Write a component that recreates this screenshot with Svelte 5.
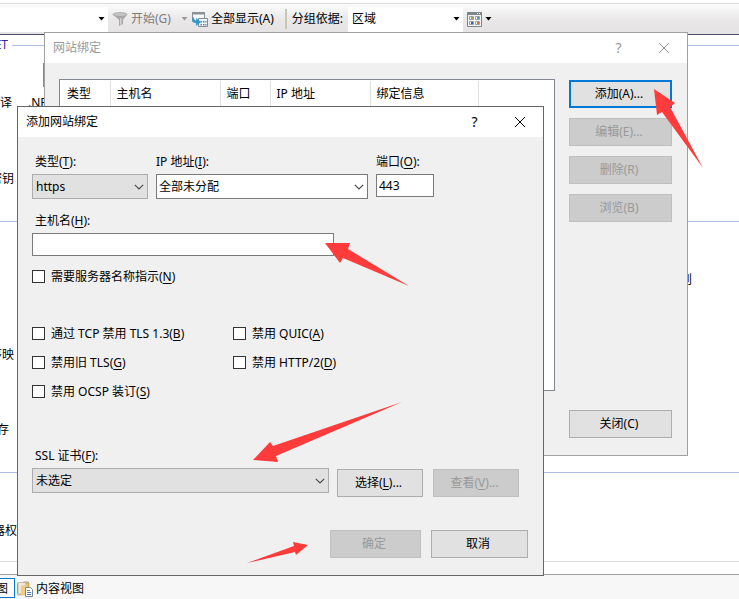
<script>
  const columns = [
    { name: '类型', width: 49 },
    { name: '主机名', width: 110 },
    { name: '端口', width: 50 },
    { name: 'IP 地址', width: 100 },
    { name: '绑定信息', width: 108 },
  ];
  const actions = [
    { label: '添加(A)...', primary: true },
    { label: '编辑(E)...', disabled: true },
    { label: '删除(R)', disabled: true },
    { label: '浏览(B)', disabled: true },
  ];
  const options = [
    { id: 'tls13', text: '通过 TCP 禁用 TLS 1.3', key: 'B' },
    { id: 'quic', text: '禁用 QUIC', key: 'A' },
    { id: 'oldtls', text: '禁用旧 TLS', key: 'G' },
    { id: 'http2', text: '禁用 HTTP/2', key: 'D' },
    { id: 'ocsp', text: '禁用 OCSP 装订', key: 'S' },
  ];
  const arrows = [
    '654,89 675,103 670,107 703,168 662,112 657,115',
    '325,243 350,243 348,249 409,286 343,258 340,263',
    '253,460 270,442 273,446 402,402 276,456 278,462',
    '247,563 294,546 293,542 308,545 296,555 295,552',
  ];
</script>

{#snippet caret()}
  <svg class="caret" width="7" height="4" viewBox="0 0 7 4" aria-hidden="true"><path d="M0.5 0h6L3.5 3.5z" fill="currentColor" /></svg>
{/snippet}

{#snippet chevron()}
  <svg class="chevron" width="10" height="6" viewBox="0 0 10 6" aria-hidden="true"><path d="M0.8 0.8L5 5 9.2 0.8" fill="none" stroke="#444" stroke-width="1.1" /></svg>
{/snippet}

{#snippet cross()}
  <svg width="12" height="12" viewBox="0 0 12 12" aria-hidden="true"><path d="M1 1l10 10M11 1L1 11" fill="none" stroke="currentColor" stroke-width="1" /></svg>
{/snippet}

<div class="app">
  <header class="toolbar">
    <div class="combo flat filter">
      <select aria-label="筛选"><option></option></select>
      {@render caret()}
    </div>
    <button class="tool dim start">
      <svg width="16" height="16" viewBox="0 0 16 16" aria-hidden="true">
        <path d="M1 3.5L7 9v6l4-2V9l4-5.5z" fill="#a9a9a9" />
        <ellipse cx="8" cy="3.5" rx="7" ry="2" fill="#c4c4c4" stroke="#999" stroke-width=".6" />
        <path d="M8 7v7l1.5-.8V7z" fill="#d0d0d0" />
      </svg>
      <span>开始(G)</span>
      {@render caret()}
    </button>
    <button class="tool all">
      <svg width="17" height="17" viewBox="0 0 17 17" aria-hidden="true">
        <path d="M1.500 1.500h12v9h-12z" fill="#f8f8f8" stroke="#8a9297" />
        <path d="M1 1h13v2.500H1z" fill="#8a9297" />
        <path d="M7.500 7.500h9v8h-9z" fill="#f1f4f8" stroke="#828c96" />
        <path d="M9.500 10h1.500v1.500H9.500zM12 10h1.500v1.500H12zM14.300 10h1.200v1.500h-1.200zM9.500 13h1.500v1.500H9.500zM12 13h1.500v1.500H12zM14.300 13h1.200v1.500h-1.200z" fill="#5c7eaa" />
        <path d="M1.500 6.500v3q0 2.500 3.500 2.500V15l5-4-5-4v2.500Q3 9.500 3 6.500z" fill="#2b9bd4" />
      </svg>
      <span>全部显示(A)</span>
    </button>
    <span class="divider"></span>
    <label for="group">分组依据:</label>
    <div class="combo flat group">
      <select id="group"><option>区域</option></select>
      {@render caret()}
    </div>
    <button class="tool views" aria-label="视图">
      <svg width="15" height="15" viewBox="0 0 15 15" aria-hidden="true">
        <path d="M.5.5h14v14H.5z" fill="#f4f4f4" stroke="#7c868b" />
        <path d="M0 0h15v3H0z" fill="#7c868b" />
        <path d="M10 1h1v1h-1zM12 1h1v1h-1z" fill="#fff" />
        <path d="M2.500 4.500h4v3h-4zM8.500 4.500h4v3h-4zM2.500 9.500h4v3h-4zM8.500 9.500h4v3h-4z" fill="#fff" stroke="#98a1a5" />
        <path d="M4 5h2v2H4z" fill="#a8a23c" /><path d="M10 5h2v2h-2z" fill="#4b9bc8" />
        <path d="M4 10h2v2H4z" fill="#4354c8" /><path d="M10 10h2v2h-2z" fill="#dd6a38" />
      </svg>
      {@render caret()}
    </button>
  </header>

  <main class="features">
    <section class="net">
      <h2><span class="clip heading">ET</span></h2>
      <span class="field-end"></span>
      <div class="items"><span class="clip wide">译</span><span>.NET</span></div>
      <span class="clip key">密钥</span>
    </section>
    <section class="iis">
      <span class="clip right">到</span>
      <span class="clip map">序映</span>
      <span class="clip cache">存</span>
    </section>
    <section class="manage">
      <span class="clip rights">器权</span>
    </section>
  </main>

  <footer class="tabs">
    <button class="tab current"><span class="clip">图</span></button>
    <button class="tab">
      <svg width="16" height="16" viewBox="0 0 16 16" aria-hidden="true">
        <path d="M.5 2.500h5l1-1.500h5v11H.5z" fill="#f4f0e4" stroke="#a5a096" />
        <path d="M1 14V5l4-1 1-2h6v11z" fill="#e7bd68" stroke="#c89c48" stroke-width=".7" />
        <path d="M1 1.500h7l1 1.500v2H5v7l-4 2z" fill="#eee9dc" stroke="#a5a096" stroke-width=".6" />
        <path d="M4 5l6-1v9l-6 2z" fill="#f0cb82" />
        <path d="M8.500 6.500h5l2 2v7h-7z" fill="#fff" stroke="#7c8793" />
        <path d="M10 9.500h3M10 11.500h4M10 13.500h4" stroke="#4d83bd" />
      </svg>
      <span>内容视图</span>
    </button>
  </footer>

  <div class="window bindings" role="dialog" aria-label="网站绑定">
    <div class="titlebar">
      <span class="title">网站绑定</span>
      <button aria-label="帮助"><span>?</span></button>
      <button aria-label="关闭窗口">{@render cross()}</button>
    </div>
    <div class="bindings-body">
      <div class="list">
        <table>
          <thead>
            <tr>
              {#each columns as c}
                <th style="width: {c.width}px">{c.name}</th>
              {/each}
              <th></th>
            </tr>
          </thead>
        </table>
      </div>
      <div class="actions">
        {#each actions as a}
          <button class="btn" class:primary={a.primary} disabled={a.disabled}>{a.label}</button>
        {/each}
        <button class="btn close">关闭(C)</button>
      </div>
    </div>
  </div>

  <div class="window add" role="dialog" aria-label="添加网站绑定">
    <div class="titlebar">
      <span class="title">添加网站绑定</span>
      <button aria-label="帮助"><span>?</span></button>
      <button aria-label="关闭窗口">{@render cross()}</button>
    </div>
    <form class="add-body" onsubmit={(e) => e.preventDefault()}>
      <div class="address">
        <div class="field">
          <label class="inset" for="type">类型(<u>T</u>):</label>
          <div class="combo gray">
            <select id="type"><option>https</option></select>
            {@render chevron()}
          </div>
        </div>
        <div class="field">
          <label for="ip">IP 地址(<u>I</u>):</label>
          <div class="combo">
            <select id="ip"><option>全部未分配</option></select>
            {@render chevron()}
          </div>
        </div>
        <div class="field">
          <label for="port">端口(<u>O</u>):</label>
          <input id="port" type="text" value="443" />
        </div>
      </div>
      <div class="field host">
        <label class="inset" for="host">主机名(<u>H</u>):</label>
        <input id="host" type="text" />
      </div>
      <label class="check sni"><input type="checkbox" /><span>需要服务器名称指示(<u>N</u>)</span></label>
      <div class="options">
        {#each options as o (o.id)}
          <label class="check"><input type="checkbox" /><span>{o.text}(<u>{o.key}</u>)</span></label>
        {/each}
      </div>
      <label class="inset" for="cert">SSL 证书(<u>F</u>):</label>
      <div class="cert">
        <div class="combo gray">
          <select id="cert"><option>未选定</option></select>
          {@render chevron()}
        </div>
        <button type="button" class="btn">选择(<u>L</u>)...</button>
        <button type="button" class="btn" disabled>查看(<u>V</u>)...</button>
      </div>
      <div class="confirm">
        <button class="btn ok" disabled>确定</button>
        <button type="button" class="btn cancel">取消</button>
      </div>
    </form>
  </div>

  <svg class="marks" width="739" height="599" viewBox="0 0 739 599" aria-hidden="true">
    {#each arrows as points}
      <polygon {points} fill="#ff3b3b" />
    {/each}
  </svg>
</div>

<style>
  :global(body) { margin: 0; }
  .app, .app * { box-sizing: border-box; }
  .app {
    position: relative;
    display: flex;
    flex-direction: column;
    min-height: 100vh;
    overflow: hidden;
    background: #fff;
    color: #000;
    font: 12px/16px "Noto Sans", "Noto Sans CJK SC", sans-serif;
    white-space: nowrap;
  }
  button, select, input { font: inherit; color: inherit; margin: 0; border-radius: 0; }
  button { padding: 0; border: 0; background: none; }
  u { text-underline-offset: 2px; }

  .toolbar {
    display: flex;
    align-items: center;
    height: 35px;
    padding-top: 4px;
    border-bottom: 1px solid #4a4a6c;
    background: linear-gradient(#fff 3px, #dcdcdc 3px, #dcdcdc 4px, #fcfcfc 4px, #e9e7e8 20px, #e4e2e3);
  }
  .tool { display: flex; align-items: center; gap: 3px; }
  .dim { color: #7d7d7d; }
  .start { margin-left: 4px; }
  .start .caret { margin-left: 7px; color: #999; }
  .all { margin-left: 3px; gap: 3px; }
  .divider { width: 2px; height: 20px; margin: 0 5px 0 11px; background: #c8c7b4; }
  .views { margin-left: 4px; }

  .combo { display: grid; align-items: center; }
  .combo select, .combo svg { grid-area: 1 / 1; }
  .combo svg { justify-self: end; pointer-events: none; }
  .combo select {
    appearance: none;
    width: 100%;
    height: 25px;
    padding: 0 20px 0 2px;
    border: 1px solid #7a7a7a;
    background: #fff;
    outline: 0;
  }
  .combo .chevron { margin-right: 4px; }
  .gray select { border-color: #adadad; background: #e1e1e1; padding-left: 3px; }
  .flat select { border: 0; padding-left: 4px; }
  .flat .caret { margin-right: 3px; }
  .filter { width: 108px; }
  .group { width: 115px; margin-left: 5px; }

  .features { flex: 1; display: flex; flex-direction: column; border-bottom: 1px solid #a0a0a0; }
  .features section { display: flex; flex-direction: column; align-items: flex-start; }
  .clip { display: flex; justify-content: flex-end; overflow: hidden; width: 14px; }
  .net { height: 187px; border-bottom: 1px solid #b0bce0; }
  h2 { display: flex; align-items: center; gap: 4px; width: 100%; margin: 2px 0 0; font: inherit; color: #3a2a9a; }
  h2::after { content: ""; flex: 1; height: 1px; background: #b0bce0; }
  .heading { width: 8px; }
  .field-end { width: 3px; height: 24px; margin: 10px 0 0 43px; border: 1px solid #888; background: #ddd; }
  .items { display: flex; gap: 16px; margin-top: 8px; }
  .clip.wide { width: 12px; }
  .key { margin-top: 60px; }
  .iis { height: 251px; border-bottom: 1px solid #b0bce0; }
  .clip.right { width: 692px; margin-top: 50px; }
  .map { margin-top: 59px; }
  .clip.cache { width: 9px; margin-top: 59px; }
  .manage { height: 89px; border-bottom: 1px solid #ddd; }
  .clip.rights { width: 17px; margin-top: 50px; }

  .tabs { display: flex; align-items: stretch; height: 24px; background: #f7f7f7; gap: 2px; }
  .tab { display: flex; align-items: center; gap: 3px; padding-top: 3px; }
  .tab.current { width: 15px; margin: 3px 0 1px; padding: 1px 6px 0 0; border: 1px solid #0078d7; border-left: 0; background: #fff; }
  .current .clip { width: 8px; }

  .window { position: absolute; display: flex; flex-direction: column; border: 1px solid #a0a0a0; background: #f0f0f0; }
  .titlebar { display: flex; align-items: center; height: 30px; padding: 0 1px 0 8px; background: #fff; }
  .title { flex: 1; }
  .titlebar button { display: grid; place-items: center; width: 45px; height: 30px; font-size: 14px; }
  .bindings { left: 44px; top: 32px; width: 644px; }
  .bindings .titlebar { color: #999; }
  .bindings-body { display: flex; gap: 14px; padding: 16px 15px 17px 14px; }
  .list { flex: 1; height: 312px; padding: 1px; border: 1px solid #828790; background: #fff; }
  table { width: 100%; table-layout: fixed; border-collapse: collapse; }
  th { height: 25px; padding: 0 0 0 6px; border-right: 1px solid #e0e0e0; font-weight: 400; text-align: left; }
  th:last-child { border-right: 0; }
  .actions { display: flex; flex-direction: column; gap: 10px; width: 103px; height: 359px; padding-top: 1px; }
  .btn { height: 28px; padding-right: 3px; border: 1px solid #adadad; background: #e1e1e1; }
  .btn.primary { border: 2px solid #0078d7; }
  .btn:disabled { border-color: #bfbfbf; background: #ccc; color: #999; }
  .btn.close { margin-top: auto; }

  .add { left: 17px; top: 106px; width: 527px; border-color: #666; }
  .add-body { display: flex; flex-direction: column; padding: 17px 15px 17px 14px; }
  .inset { padding-left: 3px; }
  .field { display: flex; flex-direction: column; gap: 4px; }
  .address { display: grid; grid-template-columns: 116px 212px 58px; column-gap: 8px; }
  .field input { height: 23px; padding: 0 2px; border: 1px solid #7a7a7a; background: #fff; outline: 0; }
  .host { width: 302px; margin-top: 14px; }
  .check { display: flex; align-items: center; gap: 6px; height: 16px; }
  .check input { appearance: none; width: 13px; height: 13px; margin-bottom: 1px; border: 1px solid #333; background: #fff; }
  .sni { margin-top: 13px; }
  .options { display: grid; grid-template-columns: 201px 1fr; row-gap: 13px; margin: 41px 0 48px; }
  .cert { display: flex; align-items: flex-end; height: 33px; }
  .cert .combo { align-self: flex-start; width: 297px; margin: 4px 8px 0 0; }
  .cert .btn { width: 86px; margin-right: 10px; }
  .confirm { display: flex; justify-content: flex-end; gap: 10px; margin-top: 33px; }
  .ok { width: 91px; }
  .cancel { width: 97px; }
  .cert .combo, .cert .btn { flex: none; }

  .marks { position: absolute; left: 0; top: 0; pointer-events: none; }
</style>
